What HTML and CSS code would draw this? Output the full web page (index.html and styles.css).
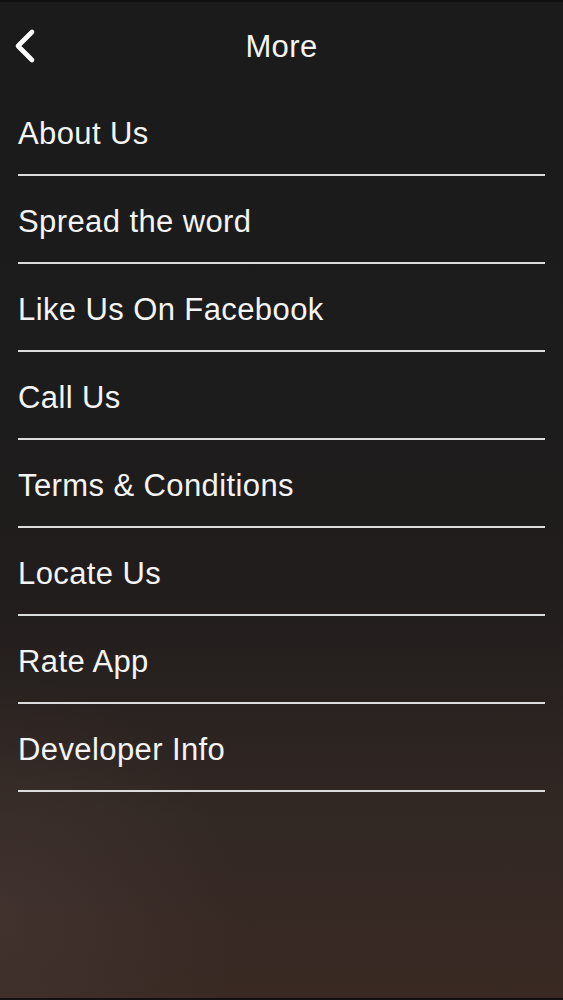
FILE: index.html
```html
<!doctype html>
<html lang="en">
  <head>
    <meta charset="UTF-8" />
    <meta name="viewport" content="width=device-width, initial-scale=1.0" />
    <title>More</title>
    <link rel="stylesheet" href="styles.css">
  </head>
  <body>
    <div class="screen">
      <!-- Nav bar -->
      <header class="nav-bar">
        <a class="back-button" href="#" title="Back">
          <svg width="28" height="38" viewBox="0 0 28 38">
            <path d="M22 5 L8 19 L22 33" fill="none" stroke="#fff" stroke-width="4.6" stroke-linecap="round" stroke-linejoin="round" />
          </svg>
        </a>
        <h1 class="nav-title">More</h1>
      </header>

      <ul class="menu-list">
        <li class="menu-item">About Us</li>
        <li class="menu-item">Spread the word</li>
        <li class="menu-item">Like Us On Facebook</li>
        <li class="menu-item">Call Us</li>
        <li class="menu-item">Terms &amp; Conditions</li>
        <li class="menu-item">Locate Us</li>
        <li class="menu-item">Rate App</li>
        <li class="menu-item">Developer Info</li>
      </ul>
    </div>
  </body>
</html>
```

FILE: styles.css
```css
body { margin: 0; overflow: hidden; font-family: "Liberation Sans", Arial, sans-serif; background-color: #111; }

.screen {
  width: 563px;
  height: 996px;
  border-top: 2px solid #101010;
  border-bottom: 2px solid #151010;
  background:
    radial-gradient(ellipse 60% 35% at 0% 92%, rgba(80, 64, 60, 0.4), rgba(80, 64, 60, 0) 70%),
    linear-gradient(to bottom, #1b1b1b 0%, #1c1c1c 38%, #211d1c 60%, #322824 82%, #3a2923 100%);
  color: white;
}

/* --- Nav bar --- */
.nav-bar {
  position: relative;
  height: 86px;
  padding-top: 4px;
  box-sizing: border-box;
  display: flex;
  align-items: center;
  justify-content: center;
}
.back-button {
  position: absolute; /* sits over the centred title row */
  left: 10px;
  top: 25px;
  display: block;
  width: 28px;
  height: 38px;
}
.back-button svg { display: block; }
.nav-title {
  margin: 0;
  font-size: 31px;
  font-weight: normal;
  letter-spacing: 0.4px;
  color: #f4f4f4;
}

/* --- Menu rows --- */
.menu-list {
  list-style: none;
  margin: 0;
  padding: 0 18px;
}
.menu-item {
  height: 88px;
  box-sizing: border-box;
  padding-top: 6px;
  display: flex;
  align-items: center;
  border-bottom: 2px solid #dcdcdc;
  font-size: 31px;
  letter-spacing: 0.4px;
  color: #f4f4f4;
}
```
